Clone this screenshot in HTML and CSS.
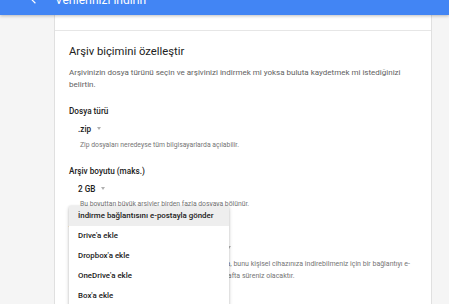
FILE: index.html
```html
<!doctype html>
<html>
<head>
<meta charset="utf-8">
<link rel="stylesheet" href="styles.css">
<title>Verilerinizi indirin</title>
</head>
<body>

    <header class="topbar">
        <svg class="back" viewBox="0 0 24 24" width="14" height="14"><path d="M20 11H7.83l5.59-5.59L12 4l-8 8 8 8 1.41-1.41L7.83 13H20v-2z" fill="#fff"/></svg>
        <h1 class="title">Verilerinizi indirin</h1>
    </header>

    <div class="page">
        <div class="card">
            <div class="section section-prev"></div>

            <div class="section">
                <h2 class="section-title">Arşiv biçimini özelleştir</h2>
                <p class="section-desc">Arşivinizin dosya türünü seçin ve arşivinizi indirmek mi yoksa buluta kaydetmek mi istediğinizi belirtin.</p>

                <div class="field">
                    <div class="field-label">Dosya türü</div>
                    <div class="select">.zip</div>
                    <div class="field-help">Zip dosyaları neredeyse tüm bilgisayarlarda açılabilir.</div>
                </div>

                <div class="field">
                    <div class="field-label">Arşiv boyutu (maks.)</div>
                    <div class="select">2 GB</div>
                    <div class="field-help">Bu boyuttan büyük arşivler birden fazla dosyaya bölünür.</div>
                </div>

                <div class="field">
                    <div class="field-label">Teslim yöntemi</div>
                    <div class="select">İndirme bağlantısını e-postayla gönder
                        <ul class="menu">
                            <li class="menu-item active">İndirme bağlantısını e-postayla gönder</li>
                            <li class="menu-item">Drive'a ekle</li>
                            <li class="menu-item">Dropbox'a ekle</li>
                            <li class="menu-item">OneDrive'a ekle</li>
                            <li class="menu-item">Box'a ekle</li>
                        </ul>
                    </div>
                    <div class="field-help field-help-long">Arşiviniz oluşturulup indirilmeye hazır olduğunda, bunu kişisel cihazınıza indirebilmeniz için bir bağlantıyı e-posta ile göndereceğiz. Arşivi indirmek için bir hafta süreniz olacaktır.</div>
                </div>
            </div>
        </div>
    </div>

</body>
</html>
```

FILE: styles.css
```css
html
{
    background:#f5f5f5;
}
body
{
    margin:0;
    font-family:Roboto, "Liberation Sans", sans-serif;
    color:#212121;
    overflow:hidden;
}
.topbar
{
    position:relative;
    z-index:2;
    display:flex;
    align-items:flex-end;
    height:15px;
    padding:0 0 8px 28px;
    box-sizing:border-box;
    overflow:hidden;
    background:#4285f4;
    box-shadow:0 1px 3px rgba(0,0,0,.25);
}
.back
{
    flex:none;
    margin:0 13px 1px 0;
}
.title
{
    margin:0;
    font-size:12px;
    line-height:14px;
    font-weight:normal;
    color:#fff;
    white-space:nowrap;
}
.page
{
    padding:0 17px 0 54px;
}
.card
{
    min-height:100vh;
    background:#fff;
    border-left:1px solid #e0e0e0;
    border-right:1px solid #e0e0e0;
}
.section
{
    padding:13px 15px 0 14px;
}
.section-prev
{
    height:15px;
    padding:0;
    border-bottom:1px solid #e6e6e6;
}
.section-title
{
    margin:0;
    font-size:11.25px;
    line-height:16px;
    font-weight:normal;
    color:#212121;
}
.section-desc
{
    margin:7px 0 0;
    font-size:8px;
    line-height:12px;
    color:#616161;
}
.field
{
    margin-top:14px;
}
.field-label
{
    font-size:8.2px;
    line-height:12px;
    font-weight:500;
}
.select
{
    position:relative;
    margin:6px 0 0 9px;
    font-size:8.2px;
    line-height:12px;
    font-weight:500;
}
.select::after
{
    content:"";
    display:inline-block;
    margin-left:6px;
    vertical-align:2px;
    border-left:2.5px solid transparent;
    border-right:2.5px solid transparent;
    border-top:3px solid #b0b0b0;
}
.field-help
{
    margin:3.5px 0 0 11px;
    font-size:6.8px;
    line-height:12px;
    color:#757575;
}
.field-help-long
{
    font-size:7px;
}
.menu
{
    position:absolute;
    z-index:1;
    top:-36px;
    left:-9px;
    width:160px;
    margin:0;
    padding:0;
    list-style:none;
    background:#fff;
    box-shadow:0 2px 4px rgba(0,0,0,.2), 0 0 2px rgba(0,0,0,.12);
}
.menu-item
{
    height:20px;
    padding-left:9px;
    font-size:7.9px;
    line-height:20px;
    font-weight:500;
    color:#212121;
    white-space:nowrap;
}
.menu-item.active
{
    background:#eeeeee;
}
```
